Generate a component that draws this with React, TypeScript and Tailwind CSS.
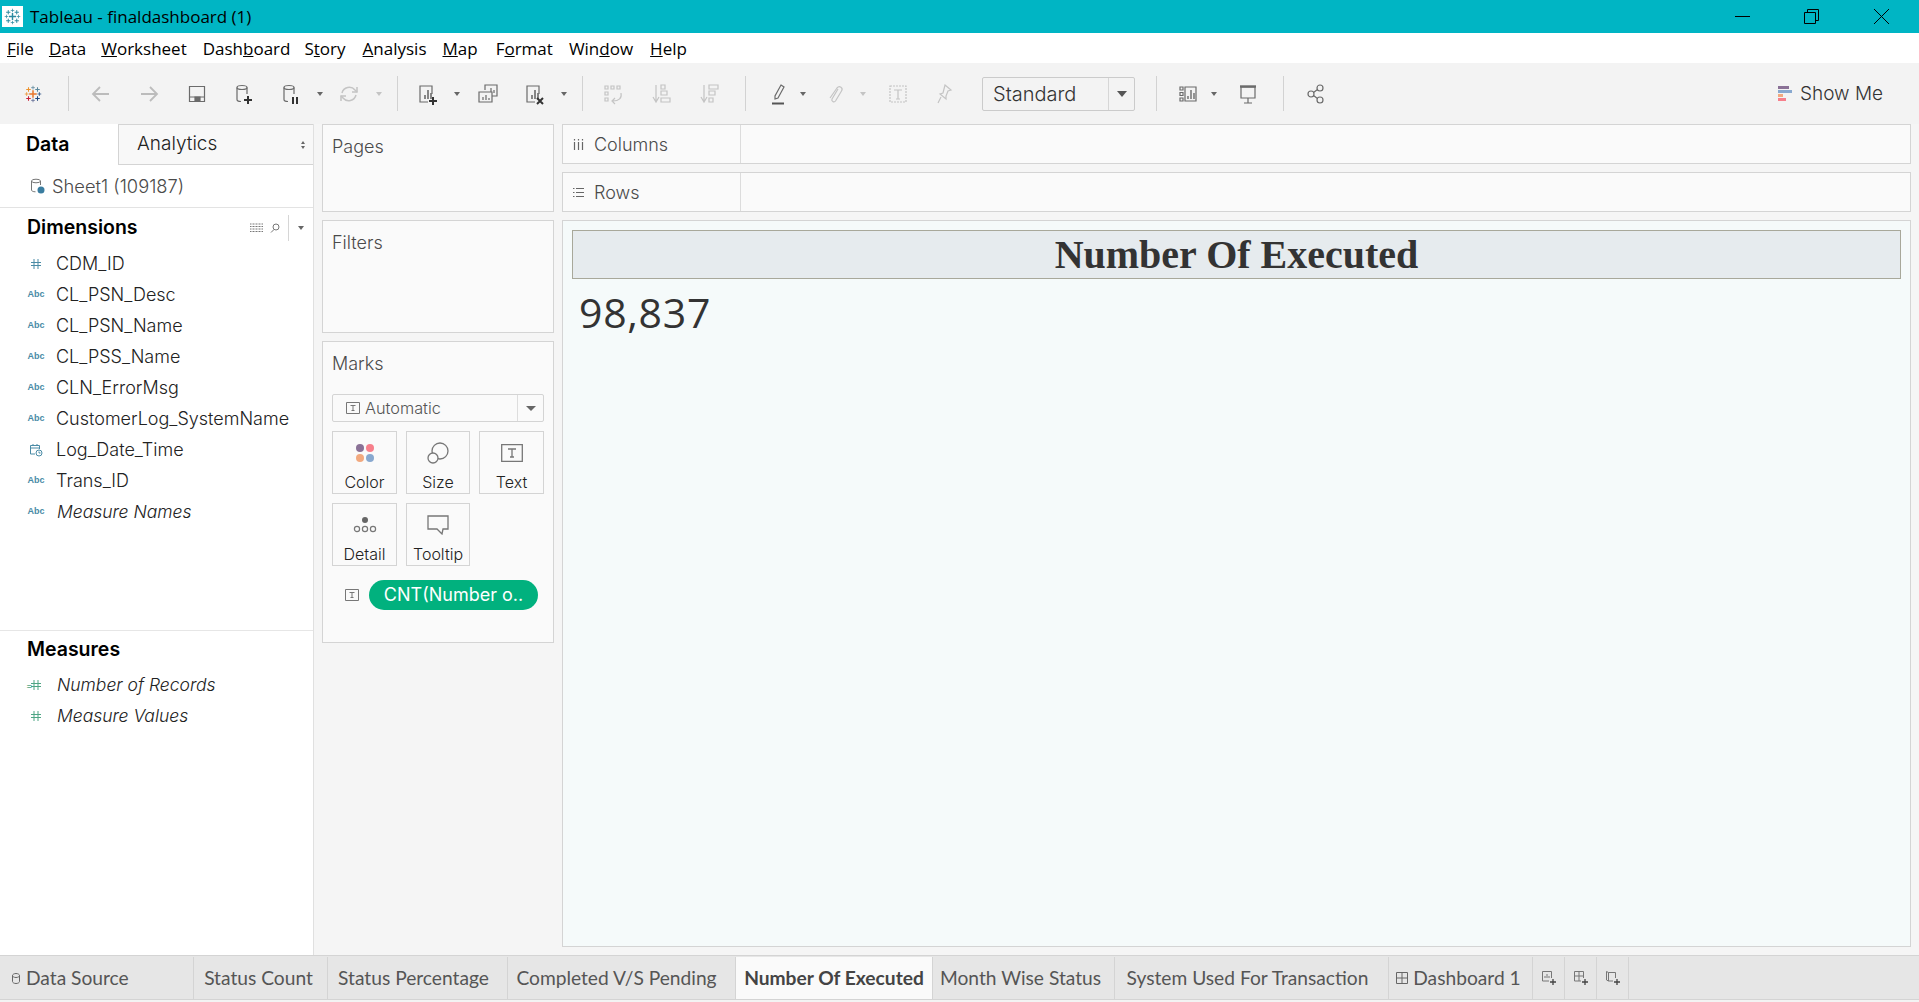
import type { ReactNode } from 'react';

const uiFont = "font-['Open_Sans','Noto_Sans',sans-serif]";
const panelFont = "font-['Inter','Liberation_Sans',sans-serif]";
const tabFont = "font-['Lato','Open_Sans',sans-serif]";

function Plus({ x, y, s, color, w = 1 }: { x: number; y: number; s: number; color: string; w?: number }) {
    return <path d={`M${x - s} ${y}H${x + s}M${x} ${y - s}V${y + s}`} stroke={color} strokeWidth={w} fill="none" />;
}

function TableauLogo({ size = 18, mono }: { size?: number; mono?: string }) {
    return (
        <svg width={size} height={size} viewBox="0 0 24 24">
            <Plus x={12} y={12} s={5} color={mono ?? '#e8762d'} w={2} />
            <Plus x={12} y={3.5} s={2.5} color={mono ?? '#5b879b'} />
            <Plus x={12} y={20.5} s={2.5} color={mono ?? '#5b6591'} />
            <Plus x={3.5} y={12} s={2.5} color={mono ?? '#eb912b'} />
            <Plus x={20.5} y={12} s={2.5} color={mono ?? '#1f457e'} />
            <Plus x={6} y={6} s={3} color={mono ?? '#eb912b'} w={1.4} />
            <Plus x={18} y={6} s={3} color={mono ?? '#59879b'} w={1.4} />
            <Plus x={6} y={18} s={3} color={mono ?? '#c72037'} w={1.4} />
            <Plus x={18} y={18} s={3} color={mono ?? '#1f457e'} w={1.4} />
        </svg>
    );
}

function Ico({ children, size = 24, color = '#6b6b6b' }: { children: ReactNode; size?: number; color?: string }) {
    return (
        <svg width={size} height={size} viewBox="0 0 24 24" fill="none" stroke={color} strokeWidth={1.2}>
            {children}
        </svg>
    );
}

function Caret({ light, className = '' }: { light?: boolean; className?: string }) {
    return (
        <div className={`flex h-4 w-2 shrink-0 items-center justify-center ${className}`}>
            <div className={`h-0 w-0 border-x-[3px] border-t-[4px] border-x-transparent ${light ? 'border-t-[#c4c4c4]' : 'border-t-[#666666]'}`} />
        </div>
    );
}

function Divider({ className = '' }: { className?: string }) {
    return <div className={`h-[35px] w-px shrink-0 bg-[#d2d2d2] ${className}`} />;
}

function Barchart() {
    return <path d="M9 17v-4M12 17V8M15 17v-6" strokeWidth={1.6} />;
}

function Toolbar() {
    return (
        <div className="flex h-[61px] shrink-0 items-center bg-[#f3f3f3] pr-[36px]">
            <div className="ml-[21px] flex w-6 shrink-0 justify-center"><TableauLogo /></div>
            <Divider className="ml-[23px]" />
            <div className="ml-[20px] w-6 shrink-0">
                <Ico color="#bcbcbc"><path d="M20 12H4M11 5l-7 7 7 7" strokeWidth={1.8} /></Ico>
            </div>
            <div className="ml-[24px] w-6 shrink-0">
                <Ico color="#bcbcbc"><path d="M4 12h16M13 5l7 7-7 7" strokeWidth={1.8} /></Ico>
            </div>
            <div className="ml-[24px] w-6 shrink-0">
                <Ico><path d="M4.500 4.500h15v15h-15zM4.500 15h15" /><path d="M10 15h5v4h-5z" fill="#6b6b6b" /></Ico>
            </div>
            <div className="ml-[23px] w-6 shrink-0">
                <Ico>
                    <ellipse cx="10" cy="5.500" rx="5" ry="2" />
                    <path d="M5 5.500v12c0 1 1.500 2 4 2M15 5.500V12" />
                    <path d="M16 14v8M12 18h8" stroke="#333333" strokeWidth={2} />
                </Ico>
            </div>
            <div className="ml-[23px] w-6 shrink-0">
                <Ico>
                    <ellipse cx="10" cy="5.500" rx="5" ry="2" />
                    <path d="M5 5.500v12c0 1 1.500 2 4 2M15 5.500V12" />
                    <path d="M14 15v7M18 15v7" stroke="#333333" strokeWidth={2} />
                </Ico>
            </div>
            <Caret className="ml-[13px]" />
            <div className="ml-[13px] w-6 shrink-0">
                <Ico color="#c4c4c4">
                    <path d="M5 11a7.500 7.500 0 0 1 13-3l2 2M19 13a7.500 7.500 0 0 1-13 3l-2-2" strokeWidth={1.5} />
                    <path d="M20 5v5h-5M4 19v-5h5" strokeWidth={1.5} />
                </Ico>
            </div>
            <Caret light className="ml-[14px]" />
            <Divider className="ml-[14px]" />
            <div className="ml-[18px] w-6 shrink-0">
                <Ico>
                    <path d="M16 12V4H4v16h8" />
                    <Barchart />
                    <path d="M17 15v8M13 19h8" stroke="#333333" strokeWidth={2} />
                </Ico>
            </div>
            <Caret className="ml-[13px]" />
            <div className="ml-[15px] w-6 shrink-0">
                <Ico>
                    <path d="M9 8V3h12v11h-5" />
                    <path d="M3 10h13v10H3z" />
                    <path d="M7 18v-3M10 18v-5M13 18v-2M15 10V6M18 11V8" />
                </Ico>
            </div>
            <div className="ml-[23px] w-6 shrink-0">
                <Ico>
                    <path d="M16 12V4H4v16h8" />
                    <Barchart />
                    <path d="M14 16l6 6M20 16l-6 6" stroke="#333333" strokeWidth={2} />
                </Ico>
            </div>
            <Caret className="ml-[13px]" />
            <Divider className="ml-[14px]" />
            <div className="ml-[18px] w-6 shrink-0">
                <Ico color="#c4c4c4">
                    <path d="M4 4h3v3H4zM10 4h3v3h-3zM16 4h3v3h-3zM4 10h3v3H4zM4 16h3v3H4z" />
                    <path d="M20 11c1 5-2 8-8 8M14 16l-3 3 3 3" />
                </Ico>
            </div>
            <div className="ml-[25px] w-6 shrink-0">
                <Ico color="#c4c4c4">
                    <path d="M6 3v16M3 15l3 5 3-5" />
                    <path d="M11 3h4v4h-4zM11 9h6v4h-6zM11 16h9v4h-9z" />
                </Ico>
            </div>
            <div className="ml-[24px] w-6 shrink-0">
                <Ico color="#c4c4c4">
                    <path d="M6 3v16M3 15l3 5 3-5" />
                    <path d="M11 3h9v4h-9zM11 9h6v4h-6zM11 16h4v4h-4z" />
                </Ico>
            </div>
            <Divider className="ml-[23px]" />
            <div className="ml-[20px] w-6 shrink-0">
                <Ico>
                    <path d="M15 3l3 2-6 11-3 1 0-3z" />
                    <path d="M6 21.500h12" stroke="#555555" strokeWidth={2} />
                </Ico>
            </div>
            <Caret className="ml-[9px]" />
            <div className="ml-[16px] w-6 shrink-0">
                <Ico color="#c4c4c4">
                    <path d="M15 7l-6 10c-1 2 2 4 3.500 2l6-10c2-3-2-6-4.500-3L7 16" />
                </Ico>
            </div>
            <Caret light className="ml-[12px]" />
            <div className="ml-[19px] w-6 shrink-0">
                <Ico color="#c4c4c4">
                    <path d="M4 4h16v16H4z" strokeDasharray="2 1" />
                    <path d="M8 8h8M12 8v9M10 17h4" />
                </Ico>
            </div>
            <div className="ml-[22px] w-6 shrink-0">
                <Ico color="#c4c4c4">
                    <path d="M13 3l6 5-3 1-2 5 0 3-6-5 3-1 1-4zM9 15l-3 6" />
                </Ico>
            </div>
            <div className="ml-[26px] flex h-[34px] w-[153px] shrink-0 items-center rounded-[2px] border border-[#cbcbcb]">
                <div className={`flex-1 pl-[10px] text-[20px] leading-none text-[#333333] ${panelFont} font-light`}>Standard</div>
                <div className="flex h-full w-[26px] items-center justify-center border-l border-[#d6d6d6]">
                    <div className="h-0 w-0 border-x-[5px] border-t-[6px] border-x-transparent border-t-[#555555]" />
                </div>
            </div>
            <Divider className="ml-[21px]" />
            <div className="ml-[19px] w-6 shrink-0">
                <Ico>
                    <path d="M4 5h3v3H4zM4 10.500h3v3H4zM4 16h3v3H4zM9 5h11v14H9z" />
                    <path d="M12 17v-3M15 17V8M18 17v-6" strokeWidth={1.4} />
                </Ico>
            </div>
            <Caret className="ml-[10px]" />
            <div className="ml-[18px] w-6 shrink-0">
                <Ico>
                    <path d="M5 5h14v11H5z" />
                    <path d="M4 4.500h16" strokeWidth={2.400} />
                    <path d="M12 16v5M8 21h8" />
                </Ico>
            </div>
            <Divider className="ml-[23px]" />
            <div className="ml-[20px] w-6 shrink-0">
                <Ico>
                    <circle cx="7" cy="12" r="3" />
                    <circle cx="16" cy="6" r="3" />
                    <circle cx="16" cy="18" r="3" />
                    <path d="M9.500 10.500l4-3M9.500 13.500l4 3" />
                </Ico>
            </div>
            <div className="ml-auto flex items-center gap-[8px]">
                <div className="flex w-[14px] flex-col gap-px">
                    <div className="h-[3px] w-[11px] bg-[#8a7196]" />
                    <div className="h-[3px] w-[14px] bg-[#88a8cf]" />
                    <div className="h-[3px] w-[5px] bg-[#f2a97f]" />
                    <div className="h-[3px] w-[8px] bg-[#f77f8b]" />
                </div>
                <span className={`text-[19px] leading-none text-[#333333] ${panelFont} font-light`}>Show Me</span>
            </div>
        </div>
    );
}

const dimensions = [
    { name: 'CDM_ID', kind: 'hash' },
    { name: 'CL_PSN_Desc', kind: 'abc' },
    { name: 'CL_PSN_Name', kind: 'abc' },
    { name: 'CL_PSS_Name', kind: 'abc' },
    { name: 'CLN_ErrorMsg', kind: 'abc' },
    { name: 'CustomerLog_SystemName', kind: 'abc' },
    { name: 'Log_Date_Time', kind: 'date' },
    { name: 'Trans_ID', kind: 'abc' },
    { name: 'Measure Names', kind: 'abc', italic: true },
];

function HashIcon({ color }: { color: string }) {
    return (
        <svg width="12" height="12" viewBox="0 0 12 12" fill="none" stroke={color} strokeWidth="1">
            <path d="M4 1v10M8 1v10M1 4.500h10M1 7.500h10" />
        </svg>
    );
}

function FieldIcon({ kind }: { kind: string }) {
    if (kind === 'hash') return <HashIcon color="#4a8ba6" />;
    if (kind === 'date') {
        return (
            <svg width="14" height="14" viewBox="0 0 14 14" fill="none" stroke="#4a8ba6" strokeWidth="1">
                <path d="M6 11H1.500V2.500h9V6M1.500 5h9M4 1v2M8 1v2" />
                <circle cx="10" cy="10" r="3" />
                <path d="M10 8.500V10h1.500" />
            </svg>
        );
    }
    return <span className="font-['Liberation_Sans',sans-serif] text-[9px] font-bold leading-none text-[#4a8ba6]">Abc</span>;
}

function DataPane() {
    return (
        <div className={`flex w-[314px] shrink-0 flex-col border-r border-[#e0e0e0] bg-white ${panelFont}`}>
            <div className="flex h-[41px] shrink-0">
                <div className="flex w-[118px] items-center pl-[26px] text-[19.500px] font-semibold text-black">Data</div>
                <div className="flex flex-1 items-center justify-between border-y border-l border-[#d4d4d4] bg-[#f8f8f8] pl-[18px] pr-[8px] text-[19px] font-light text-[#222222]">
                    Analytics
                    <div className="flex flex-col gap-[2px]">
                        <div className="h-0 w-0 border-x-[2.500px] border-b-[3px] border-x-transparent border-b-[#666666]" />
                        <div className="h-0 w-0 border-x-[2.500px] border-t-[3px] border-x-transparent border-t-[#666666]" />
                    </div>
                </div>
            </div>
            <div className="flex h-[43px] shrink-0 items-center gap-[7px] border-b border-[#e3e3e3] pl-[30px]">
                <svg width="15" height="16" viewBox="0 0 15 16" fill="none" stroke="#777777" strokeWidth="1">
                    <ellipse cx="6" cy="3" rx="4.500" ry="1.800" />
                    <path d="M1.500 3v9c0 1 1.500 1.800 4 1.800M10.500 3v4" />
                    <circle cx="11" cy="12" r="3.500" fill="#3a7da0" stroke="none" />
                </svg>
                <span className="text-[18.300px] font-light leading-none text-[#4a4a4a]">Sheet1 (109187)</span>
            </div>
            <div className="flex h-[40px] shrink-0 items-center pl-[27px] pr-[8px]">
                <span className="text-[19.500px] font-semibold leading-none text-black">Dimensions</span>
                <svg className="ml-auto" width="13" height="10" viewBox="0 0 13 10" stroke="#777777" strokeWidth="1" strokeDasharray="1 .5">
                    <path d="M0 1h13M0 3.500h13M0 6h13M0 8.500h13" />
                </svg>
                <svg className="ml-[7px]" width="10" height="10" viewBox="0 0 10 10" fill="none" stroke="#777777" strokeWidth="1">
                    <circle cx="6" cy="4" r="3" />
                    <path d="M4 6.500L1 9.500" />
                </svg>
                <div className="ml-[8px] h-[26px] w-px bg-[#d6d6d6]" />
                <Caret className="ml-[8px]" />
            </div>
            {dimensions.map((f) => (
                <div key={f.name} className="flex h-[31px] shrink-0 items-center">
                    <div className="flex w-[56px] justify-center pl-[20px] pr-[4px]"><FieldIcon kind={f.kind} /></div>
                    <span className={`font-light leading-none text-[#222222] ${f.italic ? 'pl-px text-[17.500px] italic' : 'text-[18px]'}`}>{f.name}</span>
                </div>
            ))}
            <div className="flex-1 border-b border-[#e6e6e6]" />
            <div className="flex h-[37px] shrink-0 items-center pl-[27px] text-[19.500px] font-semibold text-black">Measures</div>
            <div className="h-[1px] shrink-0" />
            {['Number of Records', 'Measure Values'].map((name, i) => (
                <div key={name} className="flex h-[31px] shrink-0 items-center">
                    <div className="relative flex w-[56px] justify-center pl-[20px] pr-[4px]">
                        {i === 0 && <span className="absolute left-[26px] top-[1px] text-[10px] leading-none text-[#4ea584]">=</span>}
                        <HashIcon color="#4ea584" />
                    </div>
                    <span className="pl-px text-[17.500px] font-light italic leading-none text-[#222222]">{name}</span>
                </div>
            ))}
            <div className="h-[224px] shrink-0" />
        </div>
    );
}

function Card({ label, children }: { label: string; children: ReactNode }) {
    return (
        <div className="flex h-[63px] flex-col items-center border border-[#d4d4d4] pt-[8px]">
            <div className="flex h-[26px] items-center">{children}</div>
            <span className="mt-[8px] text-[16px] font-light leading-none text-[#222222]">{label}</span>
        </div>
    );
}

function TBox() {
    return (
        <svg width="14" height="12" viewBox="0 0 14 12" fill="none" stroke="#777777" strokeWidth="1">
            <path d="M.5 .5h13v11H.5z" />
            <path d="M4.500 3.500h5M7 3.500v5M5.500 8.500h3" />
        </svg>
    );
}

function MiddleColumn() {
    return (
        <div className={`flex w-[232px] shrink-0 flex-col gap-[8px] ${panelFont}`}>
            <div className="h-[88px] border border-[#d4d4d4] bg-[#fafafa] pl-[9px] pt-[9px] text-[18px] font-light leading-[26px] text-[#4a4a4a]">Pages</div>
            <div className="h-[113px] border border-[#d4d4d4] bg-[#fafafa] pl-[9px] pt-[9px] text-[18px] font-light leading-[26px] text-[#4a4a4a]">Filters</div>
            <div className="h-[302px] border border-[#d4d4d4] bg-[#fafafa] px-[9px] pt-[9px]">
                <div className="text-[18px] font-light leading-[26px] text-[#4a4a4a]">Marks</div>
                <div className="mt-[17px] flex h-[28px] items-center rounded-[2px] border border-[#d4d4d4]">
                    <div className="flex flex-1 items-center gap-[5px] pl-[13px]">
                        <TBox />
                        <span className="text-[16.300px] font-light leading-none text-[#555555]">Automatic</span>
                    </div>
                    <div className="flex h-full w-[26px] items-center justify-center border-l border-[#dddddd]">
                        <div className="h-0 w-0 border-x-[5px] border-t-[5px] border-x-transparent border-t-[#666666]" />
                    </div>
                </div>
                <div className="mt-[9px] grid grid-cols-[65px_64px_65px] gap-x-[9px] gap-y-[9px]">
                    <Card label="Color">
                        <svg width="20" height="20" viewBox="0 0 20 20">
                            <circle cx="5" cy="5" r="4" fill="#8a7196" />
                            <circle cx="15" cy="5" r="4" fill="#f77f8b" />
                            <circle cx="5" cy="15" r="4" fill="#f2a97f" />
                            <circle cx="15" cy="15" r="4" fill="#88a8cf" />
                        </svg>
                    </Card>
                    <Card label="Size">
                        <svg width="22" height="22" viewBox="0 0 22 22" fill="none" stroke="#777777" strokeWidth="1.300">
                            <circle cx="13" cy="9" r="8" />
                            <circle cx="6" cy="16" r="5" fill="#fafafa" />
                        </svg>
                    </Card>
                    <Card label="Text">
                        <svg width="22" height="18" viewBox="0 0 22 18" fill="none" stroke="#777777" strokeWidth="1.300">
                            <path d="M.7 .7h20.600v16.600H.7z" />
                            <path d="M7 5h8M11 5v8M9 13h4" />
                        </svg>
                    </Card>
                    <Card label="Detail">
                        <svg width="24" height="18" viewBox="0 0 24 18" fill="none" stroke="#777777" strokeWidth="1.200">
                            <circle cx="12" cy="4" r="3" fill="#666666" stroke="none" />
                            <circle cx="4" cy="13" r="2.600" />
                            <circle cx="12" cy="13" r="2.600" />
                            <circle cx="20" cy="13" r="2.600" />
                        </svg>
                    </Card>
                    <Card label="Tooltip">
                        <svg width="22" height="20" viewBox="0 0 22 20" fill="none" stroke="#777777" strokeWidth="1.300">
                            <path d="M1 1h20v13h-5l-1 5-5-5H1z" />
                        </svg>
                    </Card>
                </div>
                <div className="mt-[14px] flex items-center pl-[13px]">
                    <TBox />
                    <div className="ml-[10px] flex h-[30px] w-[169px] items-center justify-center rounded-full bg-[#01b17e] text-[18px] font-normal leading-none text-white">CNT(Number o..</div>
                </div>
            </div>
        </div>
    );
}

function Shelf({ label, icon }: { label: string; icon: ReactNode }) {
    return (
        <div className="flex h-[40px] shrink-0 border border-[#d4d4d4] bg-[#fafafa]">
            <div className={`flex w-[178px] items-center gap-[10px] border-r border-[#dcdcdc] pl-[10px] text-[18px] font-light text-[#4a4a4a] ${panelFont}`}>
                {icon}
                {label}
            </div>
        </div>
    );
}

const tabs = [
    { label: 'Status Count', w: 'w-[134px] pr-[4px]' },
    { label: 'Status Percentage', w: 'w-[180px] pr-[8px]' },
    { label: 'Completed V/S Pending', w: 'w-[228px] pr-[10px]' },
    { label: 'Number Of Executed', w: 'w-[197px]', active: true },
    { label: 'Month Wise Status', w: 'w-[182px] pr-[6px]' },
    { label: 'System Used For Transaction', w: 'w-[274px] pr-[8px]' },
];

function TabBar() {
    return (
        <div className={`flex h-[47px] shrink-0 flex-col bg-[#f3f3f3] ${tabFont}`}>
            <div className="flex h-[45px] border-y border-[#d4d4d4] bg-[#e6e6e6] pt-px text-[19.200px] leading-none text-[#555555]">
                <div className="flex w-[194px] items-center gap-[6px] border-r border-[#d4d4d4] pl-[12px]">
                    <svg width="8" height="11" viewBox="0 0 8 11" fill="none" stroke="#666666" strokeWidth="1">
                        <path d="M.5 2.500v6c0 1 1.500 2 3.500 2s3.500-1 3.500-2v-6c0-1-1.500-2-3.500-2s-3.500 1-3.500 2c0 1 1.500 2 3.500 2s3.500-1 3.500-2" />
                    </svg>
                    Data Source
                </div>
                {tabs.map((t) => (
                    <div
                        key={t.label}
                        className={`flex ${t.w} items-center justify-center border-r border-[#d4d4d4] ${t.active ? 'bg-[#fafafa] font-bold text-[#444444]' : ''}`}
                    >
                        {t.label}
                    </div>
                ))}
                <div className="flex w-[144px] items-center justify-center gap-[5px] border-r border-[#d4d4d4] pr-[4px]">
                    <svg width="12" height="12" viewBox="0 0 12 12" fill="none" stroke="#666666" strokeWidth="1">
                        <path d="M.5 .5h11v11H.5zM6 .5v11M.5 6h11" />
                    </svg>
                    Dashboard 1
                </div>
                {['sheet', 'dash', 'story'].map((k) => (
                    <div key={k} className="flex w-[32px] items-center justify-center border-r border-[#d4d4d4]">
                        <svg width="16" height="16" viewBox="0 0 16 16" fill="none" stroke="#777777" strokeWidth="1">
                            {k === 'sheet' && <path d="M8 11H1.500V1.500h9V8M4 8V6M6 8V4M8 8V6" />}
                            {k === 'dash' && <path d="M8 11H1.500V1.500h9V8M6 1.500V11M1.500 6h9" />}
                            {k === 'story' && <path d="M8 11H3.500L1.500 10V1.500l2 1h7V8M3.500 2.500V11" />}
                            <path d="M12 9v6M9 12h6" stroke="#444444" strokeWidth="1.300" />
                        </svg>
                    </div>
                ))}
            </div>
        </div>
    );
}

export default function App() {
    const menus: [string, string, string, string][] = [
        ['ml-[7px]', '', 'F', 'ile'],
        ['ml-[15px]', '', 'D', 'ata'],
        ['ml-[15px]', '', 'W', 'orksheet'],
        ['ml-[16px]', 'Dash', 'b', 'oard'],
        ['ml-[14px]', 'S', 't', 'ory'],
        ['ml-[17px]', '', 'A', 'nalysis'],
        ['ml-[16px]', '', 'M', 'ap'],
        ['ml-[18px]', 'F', 'o', 'rmat'],
        ['ml-[16px]', 'Win', 'd', 'ow'],
        ['ml-[17px]', '', 'H', 'elp'],
    ];

    return (
        <div className="flex h-[1002px] w-full flex-col overflow-hidden bg-[#f5f5f5]">
            {/* Title bar */}
            <div className="flex h-[33px] shrink-0 items-center bg-[#00b5c4]">
                <div className="ml-[2px] flex h-[21px] w-[21px] items-center justify-center bg-white">
                    <TableauLogo size={17} mono="#2a8aa0" />
                </div>
                <span className={`ml-[7px] text-[17px] leading-none text-black ${uiFont}`}>Tableau - finaldashboard (1)</span>
                <div className="ml-auto flex items-center">
                    <div className="h-px w-[15px] bg-black" />
                    <svg className="ml-[54px]" width="15" height="15" viewBox="0 0 15 15" fill="none" stroke="black" strokeWidth="1">
                        <path d="M.5 3.500h11v11H.5zM3.500 3.500V.5h11v11h-3" />
                    </svg>
                    <svg className="ml-[55px] mr-[30px]" width="15" height="15" viewBox="0 0 15 15" fill="none" stroke="black" strokeWidth="1">
                        <path d="M0 0l15 15M15 0L0 15" />
                    </svg>
                </div>
            </div>
            {/* Menu bar */}
            <div className={`flex h-[30px] shrink-0 items-center bg-white text-[17px] leading-none text-black ${uiFont}`}>
                {menus.map(([ml, pre, key, post]) => (
                    <span key={pre + key + post} className={ml}>
                        {pre}<u>{key}</u>{post}
                    </span>
                ))}
            </div>
            <Toolbar />
            <div className="flex min-h-0 flex-1">
                <DataPane />
                <div className="flex min-w-0 flex-1 gap-[8px] pl-[8px] pr-[8px]">
                    <MiddleColumn />
                    <div className="flex min-w-0 flex-1 flex-col gap-[8px]">
                        <Shelf
                            label="Columns"
                            icon={
                                <svg width="11" height="11" viewBox="0 0 11 11" stroke="#666666" strokeWidth="1.200">
                                    <path d="M1.500 0v1.500M1.500 3v8M5.500 0v1.500M5.500 3v8M9.500 0v1.500M9.500 3v8" />
                                </svg>
                            }
                        />
                        <Shelf
                            label="Rows"
                            icon={
                                <svg width="11" height="11" viewBox="0 0 11 11" stroke="#666666" strokeWidth="1.200">
                                    <path d="M0 1.500h1.500M3 1.500h8M0 5.500h1.500M3 5.500h8M0 9.500h1.500M3 9.500h8" />
                                </svg>
                            }
                        />
                        <div className="mb-[8px] flex-1 border border-[#d4d4d4] bg-[#f5fafa] px-[9px] pt-[9px]">
                            <div className="flex h-[49px] items-center justify-center border border-[#a8a89a] bg-[#e6ebee] font-['Liberation_Serif',serif] text-[40px] font-bold leading-none text-[#333333]">
                                Number Of Executed
                            </div>
                            <div className={`mt-[8px] pl-[7px] text-[41px] leading-[50px] tracking-[0.7px] text-[#333333] ${uiFont}`}>98,837</div>
                        </div>
                    </div>
                </div>
            </div>
            <TabBar />
        </div>
    );
}
